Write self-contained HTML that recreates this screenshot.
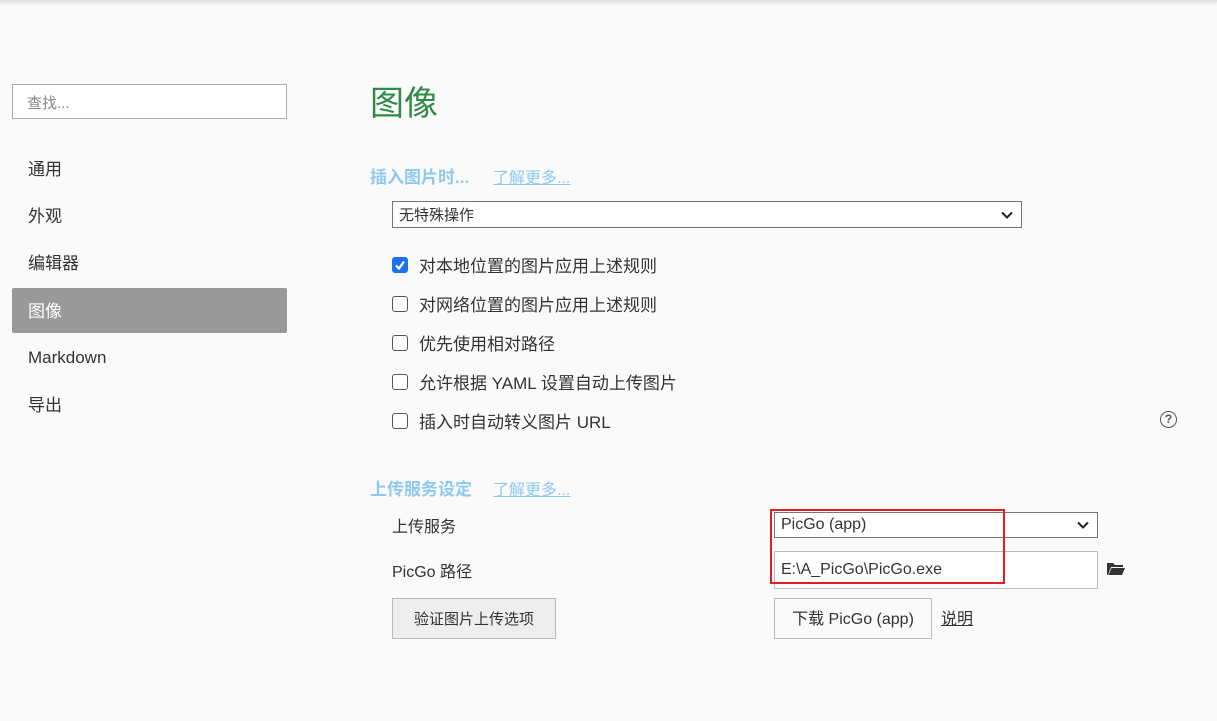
<!DOCTYPE html><html><head><meta charset="utf-8"><style>
body{margin:0;width:1217px;height:721px;background:#fafafa;font-family:"Liberation Sans","Noto Sans CJK SC",sans-serif;color:#333;position:relative;overflow:hidden}
.a{position:absolute}
.top{left:0;top:0;width:1217px;height:2px;background:#e3e3e3;box-shadow:0 1px 3px rgba(0,0,0,.12)}
.nav{left:28px;font-size:17px;color:#333;line-height:20px}
.cb{left:392px;width:14px;height:14px;border:1px solid #555;border-radius:3px;background:#fff}
.lbl{left:419px;font-size:17px;color:#333;line-height:20px}
.h{font-size:17px;font-weight:bold;color:#8fc9f0;line-height:20px}
.lnk{font-size:16px;color:#8fc9f0;text-decoration:underline;line-height:20px}
.box{background:#fff;border:1px solid #777;box-sizing:border-box}
.chev{position:absolute;right:8px;top:50%;margin-top:-4px}
</style></head><body>
<div class="a top"></div>
<div class="a box" style="left:12px;top:84px;width:275px;height:35px;border-color:#aaa;font-size:15px;color:#888;padding:7px 14px">查找...</div>
<div class="a nav" style="top:160px">通用</div>
<div class="a nav" style="top:207px">外观</div>
<div class="a nav" style="top:254px">编辑器</div>
<div class="a" style="left:12px;top:288px;width:275px;height:45px;background:#999;border-radius:2px"></div>
<div class="a nav" style="top:302px;color:#fff">图像</div>
<div class="a nav" style="top:348px">Markdown</div>
<div class="a nav" style="top:396px">导出</div>
<div class="a" style="left:370px;top:84px;font-size:34px;line-height:40px;color:#2e8b45">图像</div>
<div class="a h" style="left:370px;top:168px">插入图片时...</div>
<div class="a lnk" style="left:493px;top:169px">了解更多...</div>
<div class="a box" style="left:392px;top:201px;width:630px;height:27px;font-size:15px;padding:5px 6px;line-height:17px">无特殊操作<svg class="chev" width="12" height="8" viewBox="0 0 12 8"><path d="M1 1.5L6 6.5L11 1.5" fill="none" stroke="#222" stroke-width="2"/></svg></div>
<div class="a cb" style="top:257px;background:#1a73e8;border-color:#1a73e8"><svg width="14" height="14" viewBox="0 0 14 14" style="position:absolute;left:0;top:0"><path d="M3 7.5L6 10.5L11 3.5" fill="none" stroke="#fff" stroke-width="2.2"/></svg></div>
<div class="a lbl" style="top:257px">对本地位置的图片应用上述规则</div>
<div class="a cb" style="top:296px"></div><div class="a lbl" style="top:296px">对网络位置的图片应用上述规则</div>
<div class="a cb" style="top:335px"></div><div class="a lbl" style="top:335px">优先使用相对路径</div>
<div class="a cb" style="top:374px"></div><div class="a lbl" style="top:374px">允许根据 YAML 设置自动上传图片</div>
<div class="a cb" style="top:413px"></div><div class="a lbl" style="top:413px">插入时自动转义图片 URL</div>
<div class="a" style="left:1160px;top:411px;width:15px;height:15px;border:1.5px solid #555;border-radius:50%;font-size:12px;line-height:15px;text-align:center;font-weight:bold;color:#555">?</div>
<div class="a h" style="left:370px;top:480px">上传服务设定</div>
<div class="a lnk" style="left:493px;top:481px">了解更多...</div>
<div class="a" style="left:392px;top:518px;font-size:16px;line-height:20px">上传服务</div>
<div class="a" style="left:392px;top:563px;font-size:16px;line-height:20px">PicGo 路径</div>
<div class="a box" style="left:774px;top:512px;width:324px;height:26px;font-size:16px;padding:3px 6px;line-height:18px">PicGo (app)<svg class="chev" width="12" height="8" viewBox="0 0 12 8"><path d="M1 1.5L6 6.5L11 1.5" fill="none" stroke="#222" stroke-width="2"/></svg></div>
<div class="a box" style="left:774px;top:551px;width:324px;height:38px;border-color:#bbb;font-size:16px;padding:9px 6px;line-height:18px">E:\A_PicGo\PicGo.exe</div>
<svg class="a" style="left:1107px;top:562px" width="18" height="14" viewBox="0 0 18 14"><path d="M0 1h6l2 2h8v2H4L1 13H0z M4.5 6H18L15 13H1.5z" fill="#333"/></svg>
<div class="a" style="left:770px;top:509px;width:235px;height:75px;border:2px solid #e02020;box-sizing:border-box"></div>
<div class="a" style="left:392px;top:598px;width:164px;height:41px;background:#eee;border:1px solid #bbb;box-sizing:border-box;font-size:15px;text-align:center;line-height:41px">验证图片上传选项</div>
<div class="a" style="left:774px;top:598px;width:158px;height:41px;background:#fafafa;border:1px solid #bbb;box-sizing:border-box;font-size:16px;text-align:center;line-height:41px">下载 PicGo (app)</div>
<div class="a" style="left:941px;top:610px;font-size:16px;line-height:20px;text-decoration:underline">说明</div>
</body></html>
